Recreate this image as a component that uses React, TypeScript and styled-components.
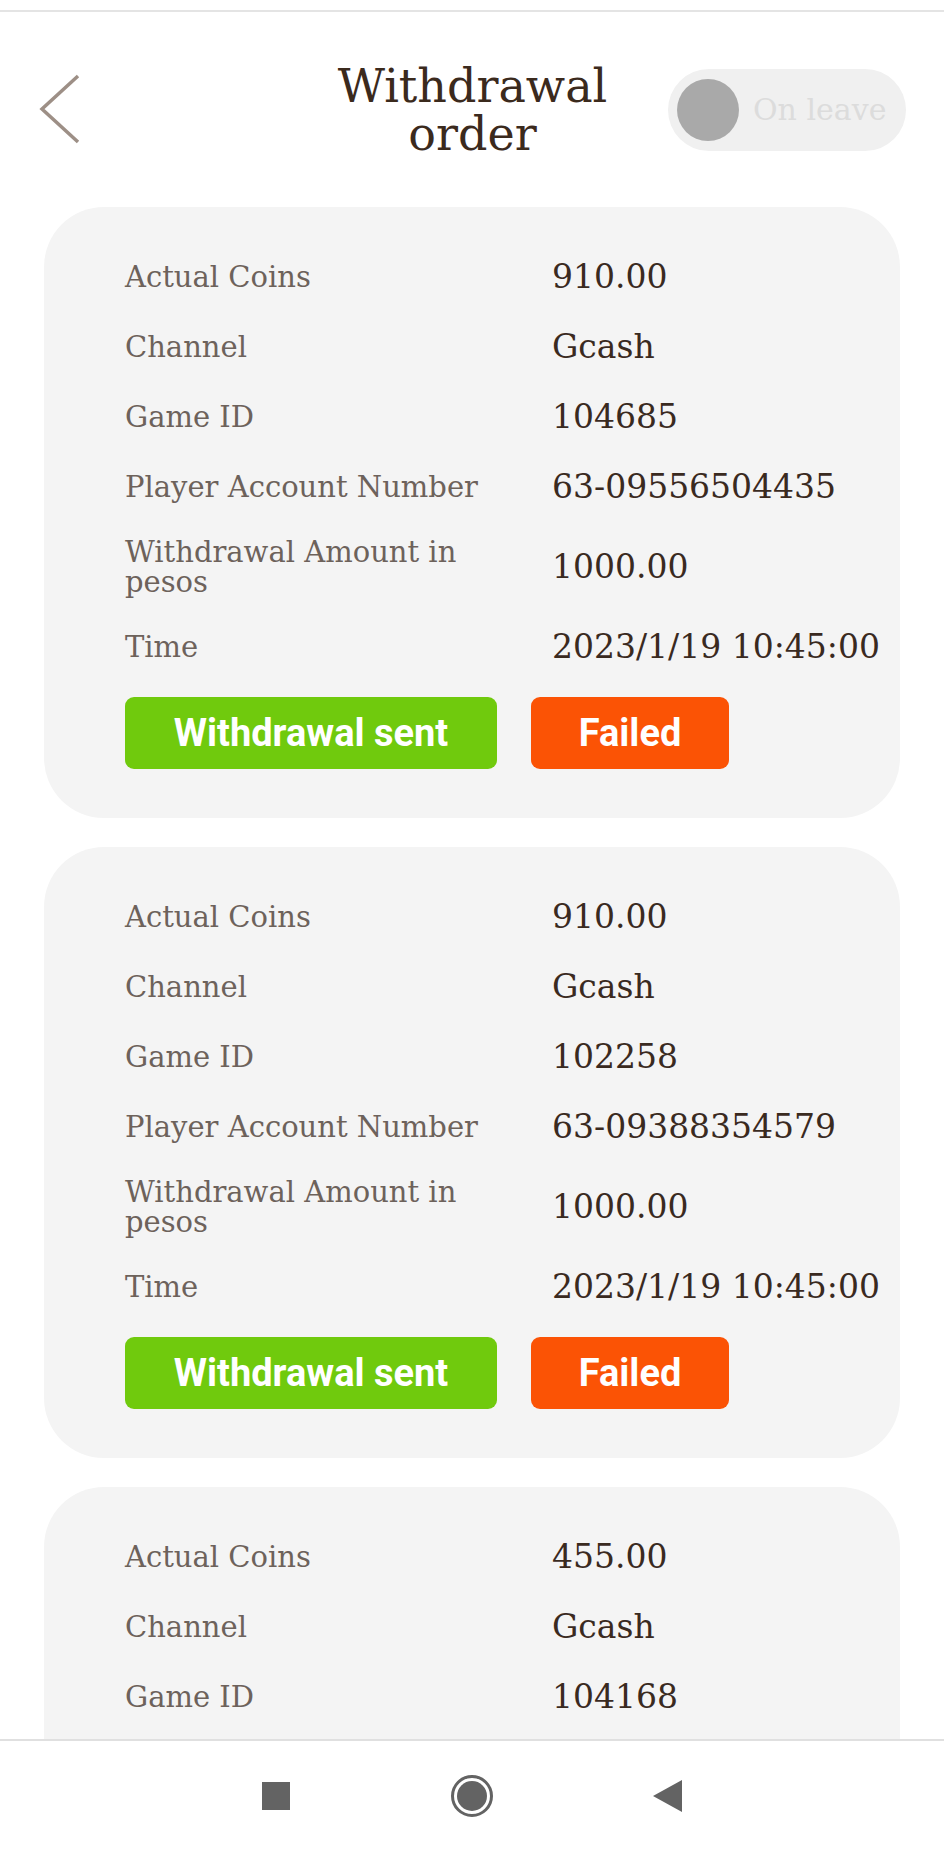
import React from "react";
import styled, { createGlobalStyle } from "styled-components";

const Global = createGlobalStyle`
  html, body { margin: 0; padding: 0; background: #ffffff; }
  body { font-family: "DejaVu Serif", serif; }
  * { box-sizing: border-box; }
`;

const Screen = styled.div`
  width: 944px;
  height: 1852px;
  display: flex;
  flex-direction: column;
  background: #ffffff;
  overflow: hidden;
`;

const TopStrip = styled.div`
  height: 12px;
  flex: none;
  border-bottom: 2px solid #e4e4e4;
`;

const Header = styled.header`
  height: 195px;
  flex: none;
  display: grid;
  grid-template-columns: 1fr auto 1fr;
  align-items: center;
  padding: 0 38px 0 39px;
`;

const BackButton = styled.button`
  justify-self: start;
  background: none;
  border: 0;
  padding: 0;
  display: flex;
  cursor: pointer;
`;

const Title = styled.h1`
  margin: 0;
  font-family: "DejaVu Serif", serif;
  font-weight: normal;
  font-size: 46px;
  line-height: 48px;
  text-align: center;
  color: #3b2a1d;
  width: 300px;
`;

const Toggle = styled.div`
  justify-self: end;
  width: 238px;
  height: 82px;
  border-radius: 41px;
  background: #f0f0f0;
  display: flex;
  align-items: center;
  padding-left: 9px;
  gap: 14px;
`;

const Knob = styled.div`
  width: 62px;
  height: 62px;
  border-radius: 50%;
  background: #a9a9a9;
  flex: none;
`;

const ToggleText = styled.span`
  font-family: "DejaVu Serif", serif;
  font-size: 30px;
  color: #dcdcdc;
  white-space: nowrap;
`;

const List = styled.main`
  flex: 1;
  min-height: 0;
  overflow: hidden;
  display: flex;
  flex-direction: column;
  gap: 29px;
  padding: 0 44px;
`;

const Card = styled.section<{ $partial?: boolean }>`
  flex: none;
  background: #f4f4f4;
  border-radius: 60px;
  padding: 50px 40px 49px 81px;
  display: flex;
  flex-direction: column;
  gap: 30px;
  min-height: ${(p) => (p.$partial ? "611px" : "0")};
`;

const Rows = styled.div`
  display: flex;
  flex-direction: column;
  gap: 30px;
`;

const Row = styled.div`
  display: grid;
  grid-template-columns: 427px 1fr;
  align-items: center;
  min-height: 40px;
`;

const Label = styled.span`
  font-family: "DejaVu Serif", serif;
  font-size: 29px;
  line-height: 30px;
  color: #6d625b;
  padding-right: 20px;
`;

const Value = styled.span`
  font-family: "DejaVu Serif", serif;
  font-size: 33px;
  line-height: 40px;
  color: #3a2a1f;
  white-space: nowrap;
`;

const Actions = styled.div`
  display: flex;
  gap: 34px;
`;

const ActionButton = styled.button<{ $color: string; $width: number }>`
  width: ${(p) => p.$width}px;
  height: 72px;
  border: 0;
  border-radius: 9px;
  background: ${(p) => p.$color};
  color: #ffffff;
  font-family: Roboto, "Liberation Sans", sans-serif;
  font-weight: 700;
  font-size: 38px;
  padding: 0;
  cursor: pointer;
`;

const NavBar = styled.nav`
  height: 113px;
  flex: none;
  border-top: 2px solid #e0e0e0;
  background: #ffffff;
  display: flex;
  align-items: center;
  justify-content: center;
  padding-bottom: 2px;
`;

const NavSlot = styled.div`
  width: 196px;
  display: flex;
  justify-content: center;
  align-items: center;
`;

type Order = {
  coins: string;
  channel: string;
  gameId: string;
  account?: string;
  amount?: string;
  time?: string;
};

const orders: Order[] = [
  {
    coins: "910.00",
    channel: "Gcash",
    gameId: "104685",
    account: "63-09556504435",
    amount: "1000.00",
    time: "2023/1/19 10:45:00",
  },
  {
    coins: "910.00",
    channel: "Gcash",
    gameId: "102258",
    account: "63-09388354579",
    amount: "1000.00",
    time: "2023/1/19 10:45:00",
  },
  {
    coins: "455.00",
    channel: "Gcash",
    gameId: "104168",
  },
];

function OrderCard({ o }: { o: Order }) {
  const rows: [string, string | undefined][] = [
    ["Actual Coins", o.coins],
    ["Channel", o.channel],
    ["Game ID", o.gameId],
    ["Player Account Number", o.account],
    ["Withdrawal Amount in pesos", o.amount],
    ["Time", o.time],
  ];
  const partial = !o.time;
  return (
    <Card $partial={partial}>
      <Rows>
        {rows
          .filter(([, v]) => v !== undefined)
          .map(([l, v]) => (
            <Row key={l}>
              <Label>{l}</Label>
              <Value>{v}</Value>
            </Row>
          ))}
      </Rows>
      {!partial && (
        <Actions>
          <ActionButton $color="#70ca0d" $width={372}>
            Withdrawal sent
          </ActionButton>
          <ActionButton $color="#fb5305" $width={198}>
            Failed
          </ActionButton>
        </Actions>
      )}
    </Card>
  );
}

export default function App() {
  return (
    <>
      <Global />
      <Screen>
        <TopStrip />
        <Header>
          <BackButton aria-label="Back">
            <svg width="42" height="72" viewBox="0 0 42 72">
              <polyline
                points="39,2 3,35 39,68"
                fill="none"
                stroke="#9d8f86"
                strokeWidth="3.5"
                strokeLinejoin="miter"
              />
            </svg>
          </BackButton>
          <Title>Withdrawal order</Title>
          <Toggle>
            <Knob />
            <ToggleText>On leave</ToggleText>
          </Toggle>
        </Header>
        <List>
          {orders.map((o, i) => (
            <OrderCard key={i} o={o} />
          ))}
        </List>
        <NavBar>
          <NavSlot>
            <svg width="28" height="28" viewBox="0 0 28 28">
              <rect x="0" y="0" width="28" height="28" fill="#636363" />
            </svg>
          </NavSlot>
          <NavSlot>
            <svg width="44" height="44" viewBox="0 0 44 44">
              <circle cx="22" cy="22" r="19.5" fill="none" stroke="#636363" strokeWidth="3" />
              <circle cx="22" cy="22" r="15" fill="#636363" />
            </svg>
          </NavSlot>
          <NavSlot>
            <svg width="30" height="32" viewBox="0 0 30 32">
              <polygon points="29,0 29,32 0,16" fill="#636363" />
            </svg>
          </NavSlot>
        </NavBar>
      </Screen>
    </>
  );
}
